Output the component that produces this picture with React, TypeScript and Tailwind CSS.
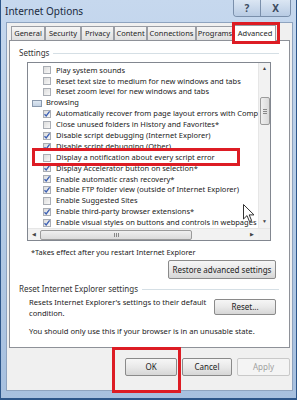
import React from "react";

const rows: { label: string; kind: "check" | "group"; checked?: boolean }[] = [
  { label: "Play system sounds", kind: "check" },
  { label: "Reset text size to medium for new windows and tabs", kind: "check" },
  { label: "Reset zoom level for new windows and tabs", kind: "check" },
  { label: "Browsing", kind: "group" },
  { label: "Automatically recover from page layout errors with Comp", kind: "check", checked: true },
  { label: "Close unused folders in History and Favorites*", kind: "check" },
  { label: "Disable script debugging (Internet Explorer)", kind: "check", checked: true },
  { label: "Disable script debugging (Other)", kind: "check", checked: true },
  { label: "Display a notification about every script error", kind: "check" },
  { label: "Display Accelerator button on selection*", kind: "check", checked: true },
  { label: "Enable automatic crash recovery*", kind: "check", checked: true },
  { label: "Enable FTP folder view (outside of Internet Explorer)", kind: "check", checked: true },
  { label: "Enable Suggested Sites", kind: "check" },
  { label: "Enable third-party browser extensions*", kind: "check", checked: true },
  { label: "Enable visual styles on buttons and controls in webpages", kind: "check", checked: true },
];

const tabs = [
  { label: "General", w: "w-[34px]" },
  { label: "Security", w: "w-[36px]" },
  { label: "Privacy", w: "w-[33px]" },
  { label: "Content", w: "w-[33px]" },
  { label: "Connections", w: "w-[49px]" },
  { label: "Programs", w: "w-[38px]" },
];

function CheckBox({ checked }: { checked?: boolean }) {
  return (
    <span className="relative flex h-[8px] w-[8px] shrink-0 items-center justify-center border border-[#a9adb4] bg-gradient-to-br from-[#dcdcdc] to-[#f8f8f8]">
      {checked && (
        <svg width="8" height="8" viewBox="0 0 8 8" className="absolute">
          <path d="M1.5 4.2 L3.2 6 L6.6 1.4" stroke="#3b5fb3" strokeWidth="1.3" fill="none" />
        </svg>
      )}
    </span>
  );
}

function WinButton({ children, className, disabled }: { children: React.ReactNode; className: string; disabled?: boolean }) {
  return (
    <div
      className={
        "flex items-center justify-center rounded-[2px] border text-[8px] " +
        (disabled
          ? "border-[#c9c9c9] bg-[#f4f4f4] text-[#a0a0a0] "
          : "border-[#8a8a8a] bg-gradient-to-b from-[#f6f6f6] via-[#e9e9e9] to-[#d6d6d6] text-[#222] ") +
        className
      }
    >
      {children}
    </div>
  );
}

export default function App() {
  return (
    <div
      className="relative h-[400px] w-[297px] overflow-hidden border-x border-b-[2px] border-[#2d568a] bg-gradient-to-b from-[#c6d8ee] via-[#b4cbe6] to-[#a7c0df] text-[#1e1e1e]"
      style={{ fontFamily: '"Noto Sans", "Open Sans", sans-serif' }}
    >
      {/* title bar */}
      <div className="flex h-[22px] items-start justify-between pl-[4px]">
        <div className="pt-[4px] text-[10px] text-[#1a2a40]">Internet Options</div>
        <div className="mr-[5px] flex h-[17px] overflow-hidden rounded-b-[4px] border border-t-0 border-[#7a8fab]">
          <div className="flex w-[26px] items-center justify-center bg-gradient-to-b from-[#dbe6f3] to-[#b8cbe3] text-[10px] font-bold text-[#3c4a60]">?</div>
          <div className="flex w-[30px] items-center justify-center border-l border-[#7a8fab] bg-gradient-to-b from-[#dbe6f3] to-[#b8cbe3] text-[10px] font-bold text-[#3c4a60]">X</div>
        </div>
      </div>

      {/* dialog body */}
      <div className="ml-[5px] mr-[3px] flex h-[369px] flex-col border border-[#8ea3bf] bg-[#f0f0f0]">
        {/* tabs */}
        <div className="flex h-[17px] items-end pl-[4px]">
          {tabs.map((t) => (
            <div
              key={t.label}
              className={"flex h-[14px] items-center justify-center border border-b-0 border-[#9a9da4] bg-gradient-to-b from-[#f6f6f6] to-[#dfdfdf] text-[7.5px] " + t.w}
            >
              {t.label}
            </div>
          ))}
          <div className="relative top-[1px] flex h-[16px] w-[42px] items-center justify-center border border-b-0 border-[#9a9da4] bg-white text-[7.5px]">
            Advanced
          </div>
        </div>

        {/* panel */}
        <div className="mx-[2px] flex h-[308px] flex-col border border-[#8e9198] bg-white">
          <div className="mt-[6px] flex items-center pl-[9px] pr-[10px]">
            <span className="text-[8px] text-[#333]">Settings</span>
            <span className="ml-[4px] h-px flex-1 bg-[#d5dfe5]" />
          </div>

          {/* list box */}
          <div className="ml-[17px] mt-[3px] flex h-[179px] w-[244px] flex-col border border-[#828790] bg-white">
            <div className="flex h-[165px]">
              <div className="flex-1 overflow-hidden pt-[2px]">
                {rows.map((r) => (
                  <div key={r.label} className="flex h-[10.9px] items-center whitespace-nowrap text-[7.5px] leading-none text-[#222]">
                    {r.kind === "group" ? (
                      <>
                        <span className="ml-[4px] mr-[4px] h-[7px] w-[10px] shrink-0 border border-[#8a99ad] bg-gradient-to-b from-[#dfe8f2] to-[#c3d2e3]" />
                        <span>{r.label}</span>
                      </>
                    ) : (
                      <>
                        <span className="ml-[15px] mr-[5px]">
                          <CheckBox checked={r.checked} />
                        </span>
                        <span>{r.label}</span>
                      </>
                    )}
                  </div>
                ))}
              </div>
              {/* vertical scrollbar */}
              <div className="flex w-[12px] flex-col items-center border-l border-[#e6e6e6] bg-[#f2f2f2]">
                <div className="flex h-[12px] items-center text-[5px] text-[#444]">▲</div>
                <div className="mt-[22px] flex h-[28px] w-[10px] items-center justify-center rounded-[2px] border border-[#9b9b9b] bg-gradient-to-r from-[#efefef] to-[#dadada]">
                  <span className="flex flex-col gap-[1px]">
                    <span className="h-px w-[4px] bg-[#888]" />
                    <span className="h-px w-[4px] bg-[#888]" />
                    <span className="h-px w-[4px] bg-[#888]" />
                  </span>
                </div>
                <div className="flex-1" />
                <div className="flex h-[12px] items-center text-[5px] text-[#444]">▼</div>
              </div>
            </div>
            {/* horizontal scrollbar */}
            <div className="flex h-[12px] border-t border-[#e6e6e6] bg-[#f2f2f2]">
              <div className="flex w-[12px] items-center justify-center text-[5px] text-[#444]">◀</div>
              <div className="flex flex-1 items-center">
                <div className="flex h-[10px] w-[152px] items-center justify-center rounded-[2px] border border-[#9b9b9b] bg-gradient-to-b from-[#efefef] to-[#dadada]">
                  <span className="flex gap-[1px]">
                    <span className="h-[4px] w-px bg-[#888]" />
                    <span className="h-[4px] w-px bg-[#888]" />
                    <span className="h-[4px] w-px bg-[#888]" />
                  </span>
                </div>
              </div>
              <div className="flex w-[12px] items-center justify-center text-[5px] text-[#444]">▶</div>
              <div className="w-[12px] bg-[#f0f0f0]" />
            </div>
          </div>

          <div className="ml-[21px] mt-[6px] text-[7.4px] text-[#222]">*Takes effect after you restart Internet Explorer</div>

          <div className="mt-[2px] flex justify-end pr-[13px]">
            <WinButton className="h-[19px] w-[108px]">Restore advanced settings</WinButton>
          </div>

          <div className="mt-[4px] flex items-center pl-[9px] pr-[10px]">
            <span className="text-[8px] text-[#333]">Reset Internet Explorer settings</span>
            <span className="ml-[4px] h-px flex-1 bg-[#d5dfe5]" />
          </div>

          <div className="mt-[2px] flex items-start pl-[19px] pr-[13px]">
            <div className="flex-1 text-[7.6px] leading-[11px] text-[#222]">
              Resets Internet Explorer's settings to their default condition.
            </div>
            <WinButton className="mt-[2px] h-[16px] w-[62px] shrink-0">Reset...</WinButton>
          </div>

          <div className="ml-[19px] mt-[7px] text-[7.6px] text-[#222]">
            You should only use this if your browser is in an unusable state.
          </div>
        </div>

        {/* bottom buttons */}
        <div className="mt-[10px] flex justify-end gap-[5px] pr-[2px]">
          <WinButton className="h-[18px] w-[52px]">OK</WinButton>
          <WinButton className="h-[18px] w-[50px]">Cancel</WinButton>
          <WinButton className="h-[18px] w-[53px]" disabled>
            Apply
          </WinButton>
        </div>
      </div>

      {/* red annotation boxes */}
      <div className="absolute left-[231px] top-[22px] h-[22px] w-[48px] border-[3px] border-[#dd1c24]" />
      <div className="absolute left-[31px] top-[148px] h-[18px] w-[208px] border-[3px] border-[#dd1c24]" />
      <div className="absolute left-[111px] top-[347px] h-[46px] w-[69px] border-[3px] border-[#dd1c24]" />

      {/* mouse cursor */}
      <svg className="absolute left-[242px] top-[204px]" width="12" height="19" viewBox="0 0 12 19">
        <path d="M0.5 0.5 L0.5 15 L4 11.6 L6.5 17.5 L8.6 16.6 L6.2 10.9 L11 10.9 Z" fill="white" stroke="#333" strokeWidth="1" />
      </svg>
    </div>
  );
}
